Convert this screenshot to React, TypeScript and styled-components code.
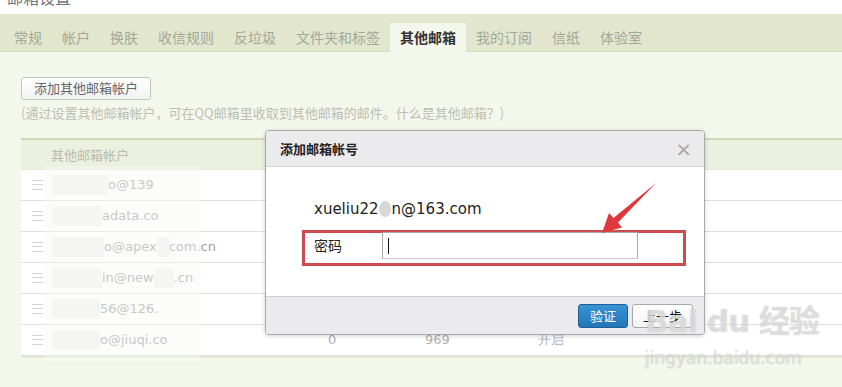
import React from "react";
import styled, { createGlobalStyle } from "styled-components";

const GlobalStyle = createGlobalStyle`
  html, body {
    margin: 0;
    padding: 0;
    width: 842px;
    height: 387px;
    overflow: hidden;
    background: #f4f7ec;
    font-family: "Noto Sans CJK SC", "DejaVu Sans", sans-serif;
  }
`;

const Page = styled.div`
  position: relative;
  width: 842px;
  height: 387px;
  overflow: hidden;
  background: #f4f7ec;
`;

const TitleBar = styled.div`
  height: 14px;
  background: #fff;
  overflow: hidden;
  padding-left: 7px;
`;

const Title = styled.div`
  margin-top: -13px;
  font-size: 16px;
  line-height: 20px;
  color: #777;
`;

const TabBar = styled.div`
  height: 38px;
  box-sizing: border-box;
  background: #e1e6cd;
  border-bottom: 1px solid #d6dcbf;
  display: flex;
  align-items: flex-end;
  padding-left: 4px;
`;

const Tab = styled.div<{ $active?: boolean }>`
  height: ${(p) => (p.$active ? "29px" : "28px")};
  line-height: 28px;
  padding: 0 10px;
  margin-bottom: ${(p) => (p.$active ? "-1px" : "0")};
  font-size: 14px;
  font-weight: ${(p) => (p.$active ? 700 : 400)};
  color: ${(p) => (p.$active ? "#333" : "#a4a898")};
  background: ${(p) => (p.$active ? "#f4f7ec" : "transparent")};
`;

const Content = styled.div`
  padding: 22px 0 0 21px;
`;

const AddButton = styled.button`
  height: 23px;
  box-sizing: border-box;
  padding: 0 12px;
  border: 1px solid #c4c4c4;
  border-radius: 3px;
  background: linear-gradient(#ffffff, #f3f3f3);
  color: #666;
  font-family: inherit;
  font-size: 13px;
  line-height: 20px;
`;

const Hint = styled.div`
  margin-top: 4px;
  font-size: 13px;
  line-height: 18px;
  color: #bcbfb3;
`;

const Table = styled.div`
  margin-top: 16px;
  border-top: 2px solid #cfd8b6;
  border-bottom: 2px solid #e2e9d2;
`;

const HeadRow = styled.div`
  height: 29px;
  line-height: 29px;
  background: #ecf1df;
  padding-left: 30px;
  font-size: 13px;
  color: #b8bbae;
  border-bottom: 1px solid #e3e8d6;
`;

const Row = styled.div`
  height: 30px;
  background: #fff;
  border-bottom: 1px solid #dedede;
  display: grid;
  grid-template-columns: 31px 276px 97px 113px 1fr;
  align-items: center;
  font-family: "DejaVu Sans", sans-serif;
  font-size: 13px;
  color: #a0a0a0;
`;

const Handle = styled.div`
  width: 11px;
  height: 8px;
  margin-left: 11px;
  border-top: 1px solid #d4d4d4;
  border-bottom: 1px solid #d4d4d4;
  position: relative;
  &::after {
    content: "";
    position: absolute;
    left: 0;
    right: 0;
    top: 3px;
    border-top: 1px solid #d4d4d4;
  }
`;

const Email = styled.div`
  display: flex;
  align-items: center;
  white-space: nowrap;
`;

const Mask = styled.span<{ $w: number }>`
  display: inline-block;
  width: ${(p) => p.$w}px;
  height: 20px;
  background: #f2f2f0;
`;

const Cell = styled.div`
  font-size: 13px;
  color: #b0b0b0;
`;

const MosaicBand = styled.div`
  position: absolute;
  left: 44px;
  top: 166px;
  width: 156px;
  height: 196px;
  background: rgba(248, 250, 244, 0.45);
  pointer-events: none;
`;

const Dialog = styled.div`
  position: absolute;
  left: 265px;
  top: 130px;
  width: 440px;
  height: 205px;
  box-sizing: border-box;
  border: 1px solid #a9a9a9;
  border-radius: 4px;
  background: #fff;
  box-shadow: 0 1px 4px rgba(0, 0, 0, 0.18);
  overflow: hidden;
  display: flex;
  flex-direction: column;
`;

const DialogHead = styled.div`
  height: 35px;
  flex: none;
  background: #ebebed;
  border-bottom: 1px solid #d3d3d3;
  display: flex;
  align-items: center;
  justify-content: space-between;
  padding: 0 12px 0 14px;
`;

const DialogTitle = styled.div`
  font-size: 13px;
  font-weight: 700;
  color: #222;
`;

const Close = styled.div`
  font-family: "DejaVu Sans", sans-serif;
  font-size: 20px;
  line-height: 20px;
  color: #a5a5a5;
`;

const DialogBody = styled.div`
  flex: 1;
  padding: 33px 0 0 36px;
`;

const Account = styled.div`
  height: 18px;
  padding-left: 12px;
  font-family: "DejaVu Sans", sans-serif;
  font-size: 15px;
  line-height: 18px;
  color: #222;
  display: flex;
  align-items: center;
`;

const Dot = styled.span`
  display: inline-block;
  width: 12px;
  height: 16px;
  border-radius: 50%;
  background: #d8d8d8;
  margin-right: 1px;
`;

const PasswordRow = styled.div`
  margin-top: 12px;
  width: 384px;
  height: 36px;
  box-sizing: border-box;
  border: 3px solid #cc4b4f;
  display: flex;
  align-items: flex-start;
  padding-left: 9px;
`;

const Label = styled.div`
  width: 68px;
  font-size: 14px;
  line-height: 24px;
  color: #222;
`;

const Input = styled.div`
  width: 256px;
  height: 27px;
  margin-top: -1px;
  box-sizing: border-box;
  border: 1px solid #aaa;
  border-bottom-color: #c8c8c8;
  display: flex;
  align-items: center;
  padding-left: 5px;
`;

const Caret = styled.div`
  width: 1px;
  height: 16px;
  background: #111;
`;

const DialogFoot = styled.div`
  height: 37px;
  flex: none;
  background: #ebebed;
  border-top: 1px solid #d0d0d0;
  display: flex;
  align-items: center;
  justify-content: flex-end;
  gap: 4px;
  padding-right: 11px;
`;

const Btn = styled.button<{ $primary?: boolean }>`
  height: 24px;
  box-sizing: border-box;
  padding: 0;
  width: ${(p) => (p.$primary ? "50px" : "61px")};
  border-radius: 3px;
  border: 1px solid ${(p) => (p.$primary ? "#1d5f98" : "#a8a8a8")};
  background: ${(p) =>
    p.$primary ? "linear-gradient(#3a93d4, #2276b8)" : "linear-gradient(#fff, #f4f4f4)"};
  color: ${(p) => (p.$primary ? "#fff" : "#111")};
  font-family: "Noto Sans CJK SC", sans-serif;
  font-size: 13px;
`;

const Overlay = styled.svg`
  position: absolute;
  left: 0;
  top: 0;
  pointer-events: none;
`;

const Watermark = styled.div`
  position: absolute;
  left: 645px;
  top: 298px;
  pointer-events: none;
  color: rgba(255, 255, 255, 0.55);
  text-shadow: 0 0 1px rgba(150, 150, 150, 0.7);
  font-family: "DejaVu Sans", "Noto Sans CJK SC", sans-serif;
`;

const MarkMain = styled.div`
  font-size: 31px;
  font-weight: 700;
  line-height: 46px;
  letter-spacing: -1px;
  white-space: nowrap;
`;

const MarkSub = styled.div`
  margin-top: 4px;
  font-size: 17px;
  line-height: 20px;
  white-space: nowrap;
`;

const tabs = ["常规", "帐户", "换肤", "收信规则", "反垃圾", "文件夹和标签", "其他邮箱", "我的订阅", "信纸", "体验室"];

// only the last row's stats peek out from under the dialog
const rows = [
  { mask: 56, text: "o@139", mid: 0, tail: "", stats: false },
  { mask: 50, text: "adata.co", mid: 0, tail: "", stats: false },
  { mask: 52, text: "o@apex", mid: 12, tail: "com.cn", stats: false },
  { mask: 50, text: "in@new", mid: 20, tail: ".cn", stats: false },
  { mask: 48, text: "56@126.", mid: 0, tail: "", stats: false },
  { mask: 48, text: "o@jiuqi.co", mid: 0, tail: "", stats: true },
];

export default function App() {
  return (
    <Page>
      <GlobalStyle />
      <TitleBar>
        <Title>邮箱设置</Title>
      </TitleBar>
      <TabBar>
        {tabs.map((t) => (
          <Tab key={t} $active={t === "其他邮箱"}>
            {t}
          </Tab>
        ))}
      </TabBar>
      <Content>
        <AddButton>添加其他邮箱帐户</AddButton>
        <Hint>(通过设置其他邮箱帐户，可在QQ邮箱里收取到其他邮箱的邮件。什么是其他邮箱？)</Hint>
        <Table>
          <HeadRow>其他邮箱帐户</HeadRow>
          {rows.map((r, i) => (
            <Row key={i}>
              <Handle />
              <Email>
                <Mask $w={r.mask} />
                {r.text}
                {r.mid > 0 && <Mask $w={r.mid} />}
                {r.tail}
              </Email>
              <Cell>{r.stats ? "0" : ""}</Cell>
              <Cell>{r.stats ? "969" : ""}</Cell>
              <Cell>{r.stats ? "开启" : ""}</Cell>
            </Row>
          ))}
        </Table>
      </Content>
      <MosaicBand />

      <Dialog>
        <DialogHead>
          <DialogTitle>添加邮箱帐号</DialogTitle>
          <Close>×</Close>
        </DialogHead>
        <DialogBody>
          <Account>
            xueliu22
            <Dot />
            n@163.com
          </Account>
          <PasswordRow>
            <Label>密码</Label>
            <Input>
              <Caret />
            </Input>
          </PasswordRow>
        </DialogBody>
        <DialogFoot>
          <Btn $primary>验证</Btn>
          <Btn>上一步</Btn>
        </DialogFoot>
      </Dialog>

      <Overlay width="842" height="387" viewBox="0 0 842 387">
        <polygon
          points="656,183 618,222.5 622,227.5 602,233 609,213 613.5,218"
          fill="#e0393d"
        />
      </Overlay>

      <Watermark>
        <MarkMain>Bai du 经验</MarkMain>
        <MarkSub>jingyan.baidu.com</MarkSub>
      </Watermark>
    </Page>
  );
}
